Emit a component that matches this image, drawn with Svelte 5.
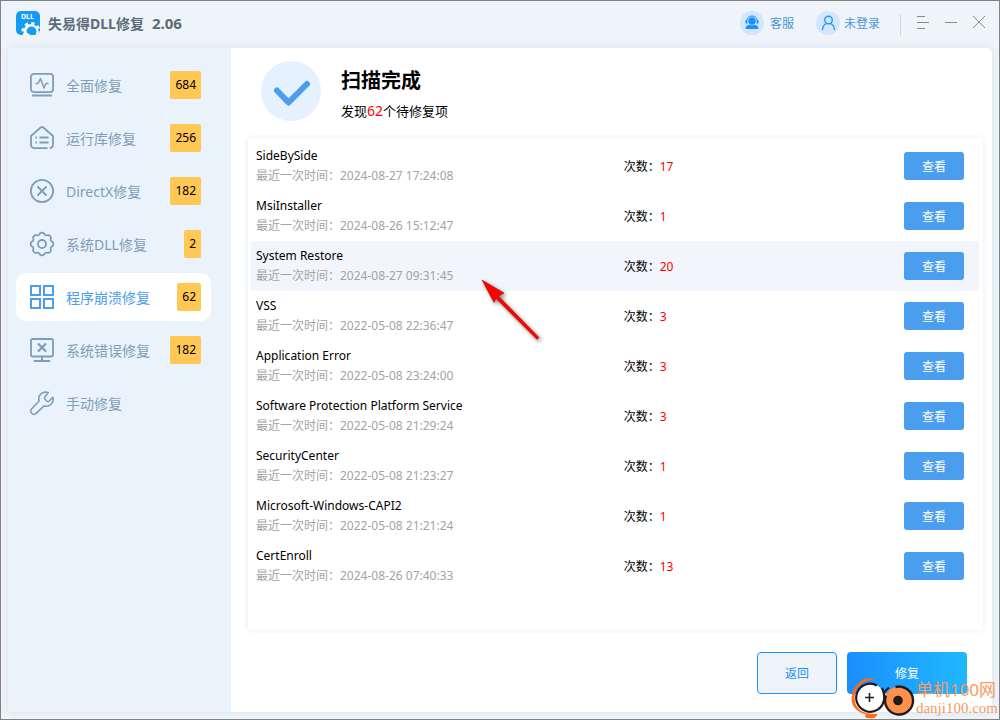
<script>
  const nav = [
    { icon: 'scan', label: '全面修复', count: 684 },
    { icon: 'runtime', label: '运行库修复', count: 256 },
    { icon: 'directx', label: 'DirectX修复', count: 182 },
    { icon: 'gear', label: '系统DLL修复', count: 2 },
    { icon: 'apps', label: '程序崩溃修复', count: 62 },
    { icon: 'monitor', label: '系统错误修复', count: 182 },
    { icon: 'wrench', label: '手动修复', count: null }
  ];
  const items = [
    { name: 'SideBySide', time: '2024-08-27 17:24:08', count: 17 },
    { name: 'MsiInstaller', time: '2024-08-26 15:12:47', count: 1 },
    { name: 'System Restore', time: '2024-08-27 09:31:45', count: 20 },
    { name: 'VSS', time: '2022-05-08 22:36:47', count: 3 },
    { name: 'Application Error', time: '2022-05-08 23:24:00', count: 3 },
    { name: 'Software Protection Platform Service', time: '2022-05-08 21:29:24', count: 3 },
    { name: 'SecurityCenter', time: '2022-05-08 21:23:27', count: 1 },
    { name: 'Microsoft-Windows-CAPI2', time: '2022-05-08 21:21:24', count: 1 },
    { name: 'CertEnroll', time: '2024-08-26 07:40:33', count: 13 }
  ];
  let active = $state('apps');
  let selected = $state(2);

  // Scalloped outline of the settings gear: eight lobes around the centre.
  const gear = (() => {
    const pts = [];
    for (let i = 0; i <= 160; i++) {
      const a = (i / 160) * Math.PI * 2;
      const r = 10.3 + 1 * Math.tanh(1.6 * Math.cos(8 * a) + 0.5);
      pts.push(`${(12 + r * Math.cos(a)).toFixed(2)} ${(12 + r * Math.sin(a)).toFixed(2)}`);
    }
    return 'M' + pts.join('L') + 'Z';
  })();
</script>

<div class="window">
  <header class="titlebar">
    <svg class="logo" viewBox="0 0 24 24" aria-hidden="true">
      <defs><clipPath id="logo-clip"><rect width="24" height="24" rx="5" /></clipPath></defs>
      <g clip-path="url(#logo-clip)">
        <rect width="24" height="24" fill="#129cf3" />
        <circle cx="15" cy="20.500" r="7.500" fill="#fff" />
        <circle cx="15" cy="20.500" r="8.400" fill="none" stroke="#fff" stroke-width="2.400" stroke-dasharray="3.300 3.297" />
        <circle cx="15.500" cy="20.500" r="5" fill="#129cf3" />
        <path d="M7 24c0-3 3-3.500 4.500-2 1.500 1.200 2 2 4 2z" fill="#fff" />
      </g>
      <text x="5" y="8" class="logo-text">DLL</text>
    </svg>
    <h1>失易得DLL修复<span class="version">2.06</span></h1>
    <button class="account service">
      <svg viewBox="0 0 24 24" aria-hidden="true">
        <circle cx="12" cy="12" r="12" fill="#d2e7fd" />
        <circle cx="12" cy="10" r="3.800" fill="#1b91ff" />
        <path d="M6.800 11V9.500a5.200 4.500 0 0 1 10.400 0V11" fill="none" stroke="#1b91ff" stroke-width="1" />
        <path d="M5.500 9h1.800v3.500H5.500zM16.700 9h1.800v3.500h-1.800zM5.500 18c0-3 2-4 4.500-4.200 1 .8 3 .8 4 0 2.500.2 4.500 1.200 4.500 4.200z" fill="#1b91ff" />
      </svg>
      客服
    </button>
    <button class="account">
      <svg viewBox="0 0 24 24" aria-hidden="true">
        <circle cx="12" cy="12" r="12" fill="#d2e7fd" />
        <g fill="none" stroke="#2f95f7" stroke-width="1.400" stroke-linecap="round">
          <circle cx="12.500" cy="9" r="3.800" />
          <path d="M6.500 18.500c.3-3 1.800-5 4-5.800M18.500 18.500c-.3-3-1.800-5-4-5.800" />
        </g>
      </svg>
      未登录
    </button>
    <span class="divider"></span>
    <div class="controls">
      <button aria-label="菜单"><svg viewBox="0 0 14 14"><path d="M1 .5h8M1 6.500h12M1 12.500h8" /></svg></button>
      <button aria-label="最小化"><svg viewBox="0 0 14 14"><path d="M1 6.500h12" /></svg></button>
      <button aria-label="关闭"><svg viewBox="0 0 14 14"><path d="M1 0l12 12M13 0L1 12" /></svg></button>
    </div>
  </header>

  <div class="body">
    <nav>
      {#each nav as n}
        <button class="nav-item" class:active={active === n.icon} onclick={() => (active = n.icon)}>
          <svg viewBox="0 0 24 24" aria-hidden="true">
            {#if n.icon === 'scan'}
              <rect x="0.900" y="0.900" width="22.200" height="18.200" rx="3" />
              <path d="M6 10.500h2l2.500-5 3.500 9.500 2-4.500h2" stroke-width="1.500" />
              <path d="M2 22.500h20" stroke-width="2" stroke-linecap="butt" />
            {:else if n.icon === 'runtime'}
              <path d="M17 22.100h-13a3 3 0 0 1-3-3V10L11 1.300a1.600 1.600 0 0 1 2 0L23 10v9.100a3 3 0 0 1-2.500 2.900" />
              <path d="M5.500 11.500h1.500M9.500 11.500h9M5.500 16.500h1.500M9.500 16.500h9" stroke-linecap="butt" />
            {:else if n.icon === 'directx'}
              <circle cx="12" cy="12" r="11.100" />
              <path d="M8 8l8 8M16 8l-8 8" stroke-width="2" />
            {:else if n.icon === 'gear'}
              <path d={gear} />
              <circle cx="12" cy="12" r="4" />
            {:else if n.icon === 'apps'}
              <path d="M1 1h9v9H1zM14 1h9v9h-9zM1 14h9v9H1zM14 14h9v9h-9z" stroke-width="2" stroke-linejoin="miter" />
            {:else if n.icon === 'monitor'}
              <rect x="1" y="1" width="22" height="17.500" rx="1.500" />
              <path d="M8 5.500l8 8M16 5.500l-8 8" stroke-width="2.200" stroke-linecap="butt" />
              <path d="M12 18.500v4M4.500 23h15" stroke-width="2" />
            {:else}
              <path d="M18.300 1.500a7 7 0 0 0-9.200 8.500L1.700 17.800a3 3 0 0 0 4.500 4.500L14 14.900a7 7 0 0 0 8.900-8.600L19.300 10c-.8.700-1.800.7-2.600 0l-1.700-1.700c-.7-.8-.7-1.800 0-2.500z" stroke-width="1.600" />
            {/if}
          </svg>
          <span class="nav-label">{n.label}</span>
          {#if n.count !== null}<span class="badge">{n.count}</span>{/if}
        </button>
      {/each}
    </nav>

    <main>
      <section class="summary">
        <svg class="check" viewBox="0 0 60 60" aria-hidden="true">
          <circle cx="30" cy="30" r="30" fill="#e5f1fe" />
          <path d="M16 29.500L27.500 41.500 46 23" fill="none" stroke="#4a9eed" stroke-width="6" stroke-linecap="round" stroke-linejoin="round" />
        </svg>
        <div class="result">
          <h2>扫描完成</h2>
          <p>发现<em>62</em>个待修复项</p>
        </div>
      </section>

      <section class="card">
        <table>
          <tbody>
            {#each items as it, i}
              <tr class:selected={selected === i} onclick={() => (selected = i)}>
                <td class="event">
                  <div class="name">{it.name}</div>
                  <div class="time">最近一次时间：{it.time}</div>
                </td>
                <td class="times">次数：<em>{it.count}</em></td>
                <td class="action"><button class="view">查看</button></td>
              </tr>
            {/each}
          </tbody>
        </table>
      </section>

      <footer>
        <button class="back">返回</button>
        <button class="repair">修复</button>
      </footer>
    </main>
  </div>

  <svg class="pointer" viewBox="0 0 64 68" aria-hidden="true">
    <path d="M3 1L25 14 19.500 17 60 58.500 58 60.500 17 19.500 15 23.500z" fill="#fe0000" stroke="#a11" stroke-width="0.600" />
  </svg>

  <div class="watermark">
    <svg viewBox="0 0 66 42" aria-hidden="true">
      <path d="M24 3C19-2 3 4 1.500 21c0 12 11 16 15 16-3 2-1 4 3 4 5 1 7-1 8-4-14 1-23-5-23-16C4.500 11 12 3 24 3z" fill="#ff6a13" />
      <circle cx="20" cy="20.500" r="14" fill="#fff" />
      <path d="M27 8.500A14 14 0 1 0 34 23c.5-4 0-8-2-12M33.500 17c1-3 3-4.500 5.500-6.500" fill="none" stroke="#221a1c" stroke-width="2.200" />
      <path d="M15 20.500h9M19.500 16v9" stroke="#221a1c" stroke-width="1.600" />
      <circle cx="49" cy="23.500" r="14" fill="#ff914d" />
      <path d="M45.500 10A14 14 0 1 1 36 18.500" fill="none" stroke="#221a1c" stroke-width="2.400" />
      <circle cx="48" cy="23.500" r="4.800" fill="#221a1c" />
    </svg>
    <div class="site"><strong>单机100网</strong><span>danji100.com</span></div>
  </div>
</div>

<style>
  :global(body) { margin: 0; }
  .window, button {
    font-family: "Noto Sans", "Noto Sans CJK SC", sans-serif;
  }
  .window {
    position: relative;
    box-sizing: border-box;
    min-height: 100vh;
    display: flex;
    flex-direction: column;
    overflow: hidden;
    padding: 0 7px 7px;
    border: 1px solid #808285;
    background: #eff4f9;
    font-size: 12px;
    color: #000;
  }
  button { border: 0; padding: 0; background: none; font-size: 12px; cursor: pointer; }
  h1, h2, p { margin: 0; }
  em { font-style: normal; color: #f00; }

  .titlebar { display: flex; align-items: center; height: 47px; padding: 0 6px 3px 8px; box-sizing: border-box; }
  .logo { width: 24px; height: 24px; margin-right: 8px; }
  .logo-text { font: bold 7px "Noto Sans", sans-serif; fill: #fff; }
  h1 { flex: 1; font-size: 14px; line-height: 20px; color: #5c6b7a; }
  .version { margin-left: 8px; font-size: 15px; }
  .account { display: flex; align-items: center; gap: 4px; margin-right: 20px; color: #4c95dc; }
  .service { margin-right: 22px; gap: 6px; }
  .account svg { width: 24px; height: 24px; }
  .divider { width: 1px; height: 22px; margin: 4px 15px 0 0; background: #d3d6da; }
  .controls { display: flex; gap: 14px; }
  .controls button { display: flex; }
  .controls svg { width: 14px; height: 14px; overflow: visible; fill: none; stroke: #858a8f; stroke-width: 1; }

  .body { flex: 1; display: flex; border-radius: 6px; box-shadow: 0 0 8px #d5e2ee; }
  nav {
    width: 223px;
    box-sizing: border-box;
    padding: 13px 20px 13px 8px;
    display: flex;
    flex-direction: column;
    gap: 5px;
    background: #eaf3fb;
  }
  .nav-item {
    display: flex;
    align-items: center;
    height: 48px;
    padding: 0 10px 0 14px;
    border-radius: 10px;
    color: #7f9db9;
    text-align: left;
  }
  .nav-item.active { background: #fff; color: #4a9eed; }
  .nav-item svg {
    width: 24px;
    height: 24px;
    overflow: visible;
    fill: none;
    stroke: currentColor;
    stroke-width: 1.8;
    stroke-linecap: round;
    stroke-linejoin: round;
  }
  .nav-label { flex: 1; margin-left: 12px; padding-top: 1px; font-size: 14px; line-height: 20px; }
  .badge {
    padding: 0 5px;
    border-radius: 2px;
    background: #ffc754;
    color: #000;
    line-height: 28px;
  }

  main {
    flex: 1;
    min-width: 0;
    display: flex;
    flex-direction: column;
    padding: 13px 9px 18px 17px;
    background: #fff;
    border-top-right-radius: 6px;
  }
  .summary { display: flex; align-items: center; gap: 20px; height: 60px; margin: 0 0 17px 13px; }
  .check { width: 60px; height: 60px; }
  .result { padding-top: 8px; }
  h2 { font-size: 20px; line-height: 32px; }
  .summary p { font-size: 13px; line-height: 28px; }
  .summary em { font-size: 14px; }

  .card { flex: 1; padding: 3px 4px 36px 3px; border-radius: 4px; box-shadow: 0 0 6px #e6ebf2; }
  table { width: 100%; border-collapse: collapse; table-layout: fixed; }
  tr { height: 50px; }
  tr.selected { background: #f2f5fc; }
  td { padding: 0; }
  .event { width: 50.5%; padding-left: 5px; }
  .name, .time { line-height: 20px; }
  .time { color: #a3a3a3; }
  .action { padding-right: 15px; text-align: right; }
  .view { width: 60px; height: 28px; border-radius: 3px; background: #4a9eed; color: #fff; vertical-align: middle; }

  footer { display: flex; justify-content: flex-end; gap: 10px; padding: 22px 16px 0 0; }
  footer button { height: 42px; border-radius: 4px; }
  .back { width: 80px; border: 1px solid #1b91ff; background: #eff4f9; color: #1b8cf5; }
  .repair { width: 120px; background: linear-gradient(90deg, #1a8fff, #20b8ff); color: #fff; }

  .pointer {
    position: absolute;
    left: 478px;
    top: 278px;
    width: 64px;
    height: 68px;
    pointer-events: none;
    filter: drop-shadow(2px 2px 2px #0007);
  }
  .watermark { position: absolute; right: 1px; bottom: 0; display: flex; align-items: center; pointer-events: none; }
  .watermark svg { width: 66px; height: 42px; }
  .site { display: flex; flex-direction: column; color: #f99a5f; white-space: nowrap; }
  .site strong { font-weight: 400; font-size: 17px; line-height: 20px; }
  .site span { font-family: "Liberation Serif", serif; font-size: 15px; line-height: 16px; }
</style>
